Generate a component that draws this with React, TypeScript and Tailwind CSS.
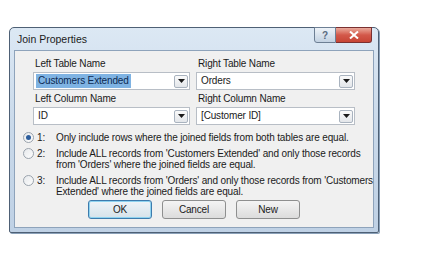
import React from "react";

const font = { fontFamily: '"Liberation Sans", Arial, sans-serif' };

function DropBtn() {
  return (
    <div className="w-[14px] h-[13px] border border-[#a9b3bf] rounded-[2px] bg-gradient-to-b from-[#fafafa] to-[#e3e6ea] flex items-center justify-center mr-[1px]">
      <svg width="7" height="4" viewBox="0 0 7 4">
        <path d="M0 0 H7 L3.5 4 Z" fill="#1a1a1a" />
      </svg>
    </div>
  );
}

function Combo({ value, selected }: { value: string; selected?: boolean }) {
  return (
    <div className="h-[18px] bg-white border border-[#b8bec6] flex items-center pl-[2px]">
      <div className="flex-1 flex items-center">
        {selected ? (
          <span className="bg-[#7fb3e3] text-[#0d2a52] px-[2px] leading-[14px]">{value}</span>
        ) : (
          <span className="px-[2px] leading-[14px] text-[#1a1a1a]">{value}</span>
        )}
      </div>
      <DropBtn />
    </div>
  );
}

function Radio({ checked }: { checked?: boolean }) {
  return (
    <div className="w-[11px] h-[11px] rounded-full border border-[#9aa3ad] bg-gradient-to-br from-[#e6e9ec] to-[#fdfdfd] flex items-center justify-center shrink-0">
      {checked && <div className="w-[5px] h-[5px] rounded-full bg-[#2c5d9c]" />}
    </div>
  );
}

function Option({ n, lines, checked }: { n: string; lines: string[]; checked?: boolean }) {
  return (
    <div className="flex items-start whitespace-nowrap">
      <div className="w-[22px] h-[11px] flex items-center pl-[8px]">
        <Radio checked={checked} />
      </div>
      <div className="w-[19px] leading-[11px]">{n}</div>
      <div className="leading-[11px] flex flex-col">
        {lines.map((l, i) => (
          <div key={i}>{l}</div>
        ))}
      </div>
    </div>
  );
}

function Btn({ label, def }: { label: string; def?: boolean }) {
  return (
    <div
      className={
        "w-[64px] h-[19px] rounded-[3px] flex items-center justify-center text-[#1a1a1a] " +
        (def
          ? "border border-[#3d7bad] shadow-[inset_0_0_0_1px_#8fd3f0] bg-gradient-to-b from-[#eef4f8] to-[#d6e2ea]"
          : "border border-[#8e8f8f] bg-gradient-to-b from-[#f4f4f4] to-[#dcdcdc]")
      }
    >
      {label}
    </div>
  );
}

export default function App() {
  return (
    <div className="w-[440px] h-[256px] bg-white pt-[27px] pl-[9px]" style={font}>
      <div className="w-[370px] h-[206px] border border-[#4e6075] rounded-t-[5px] rounded-b-[2px] bg-gradient-to-b from-[#dce8f4] via-[#c9d9ea] to-[#bfd1e5] flex flex-col px-[4px] pb-[4px] shadow-[1px_1px_0_#8aa0b8]">
        <div className="h-[22px] flex justify-between items-start">
          <div className="pl-[3px] pt-[5px] text-[10.5px] leading-[13px] text-[#1b1b1b] whitespace-nowrap">Join Properties</div>
          <div className="flex mr-[2px] -mt-[1px]">
            <div className="w-[22px] h-[16px] rounded-bl-[3px] border border-[#6d7f94] bg-gradient-to-b from-[#eef3f8] to-[#c3d2e2] flex items-center justify-center text-[10px] font-bold text-[#5a6b80]">
              ?
            </div>
            <div className="w-[36px] h-[16px] rounded-br-[3px] border border-l-0 border-[#7a3030] bg-gradient-to-b from-[#e9a99c] via-[#d3584a] to-[#c74535] flex items-center justify-center">
              <svg width="10" height="8" viewBox="0 0 10 8">
                <path d="M1 0.5 L9 7.5 M9 0.5 L1 7.5" stroke="#ffffff" strokeWidth="2" />
              </svg>
            </div>
          </div>
        </div>
        <div className="flex-1 bg-[#f0f0f0] border border-[#8ea3bb] text-[10px] tracking-[-0.15px] text-[#1a1a1a] flex flex-col whitespace-nowrap">
          <div className="grid grid-cols-[157px_159px] gap-x-[6px] pl-[18px] pt-[5px]">
            <div className="pl-[2px] h-[16px] leading-[16px]">Left Table Name</div>
            <div className="pl-[2px] h-[16px] leading-[16px]">Right Table Name</div>
            <Combo value="Customers Extended" selected />
            <Combo value="Orders" />
            <div className="pl-[2px] h-[17px] leading-[18px]">Left Column Name</div>
            <div className="pl-[2px] h-[17px] leading-[18px]">Right Column Name</div>
            <Combo value="ID" />
            <Combo value="[Customer ID]" />
          </div>
          <div className="flex flex-col gap-[5px] pt-[7px]">
            <Option n="1:" checked lines={["Only include rows where the joined fields from both tables are equal."]} />
            <Option
              n="2:"
              lines={[
                "Include ALL records from 'Customers Extended' and only those records",
                "from 'Orders' where the joined fields are equal.",
              ]}
            />
            <Option
              n="3:"
              lines={[
                "Include ALL records from 'Orders' and only those records from 'Customers",
                "Extended' where the joined fields are equal.",
              ]}
            />
          </div>
          <div className="flex gap-[10px] pl-[73px] pt-[3px]">
            <Btn label="OK" def />
            <Btn label="Cancel" />
            <Btn label="New" />
          </div>
        </div>
      </div>
    </div>
  );
}
